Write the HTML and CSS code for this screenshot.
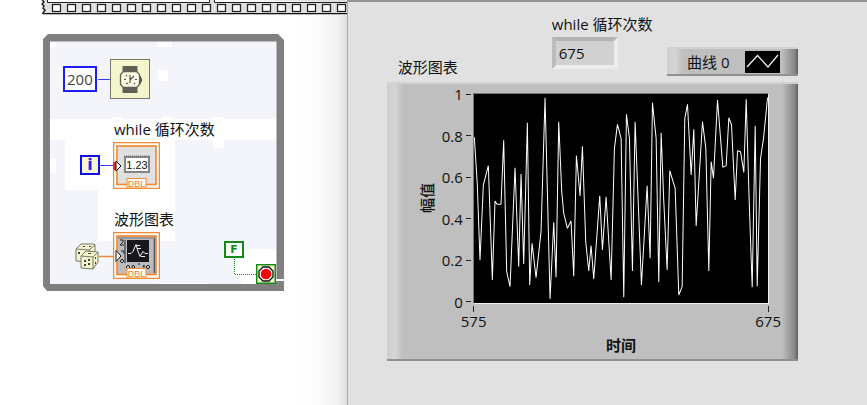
FILE: index.html
```
<!DOCTYPE html>
<html lang="zh-CN">
<head>
<meta charset="utf-8">
<title>while 循环 - 波形图表</title>
<link rel="stylesheet" href="styles.css">
</head>
<body>
<main class="workspace">
  <section class="diagram" aria-label="程序框图">
    <svg class="filmstrip" width="308" height="16" aria-hidden="true">
      <defs>
        <pattern id="hole" x="10" y="3" width="15" height="11" patternUnits="userSpaceOnUse">
          <rect x="1.5" y="1.5" width="8" height="7" fill="#fff" stroke="#222" stroke-width="1.3"/>
        </pattern>
      </defs>
      <rect x="2" width="306" height="14" fill="#e0e0e0"/>
      <path d="M6.500 -1V2.500H168.500V-1M173.500 -1V2.500H309" fill="#fff" stroke="#222"/>
      <rect x="10" y="3" width="298" height="10" fill="url(#hole)"/>
      <path d="M1 13.500H308" stroke="#111"/>
      <path d="M2 14.500H308" stroke="#bbb"/>
      <path d="M1 0l2 2-2 2 2 2-1 2 2 2-2 3" fill="none" stroke="#222" stroke-width="1.500"/>
    </svg>

    <div class="loop">
      <svg class="loop-art" width="242" height="258" viewBox="42 34 242 258" aria-hidden="true">
        <path d="M43 39l5-5h230l6 6v239h-8v5h8v7H47l-4-5z" fill="#808080"/>
        <path d="M50 41.500h226.500v242.500H50z" fill="#f4f5fb"/>
        <path d="M50 42h6v5h-6zM158 42h14v5h-14zM158 70h10v11h-10zM112 117h10v2h-10zM162 117h11v2h-11zM213 117h11v31h-11zM50 119h226v21H50zM65 140h110v50H65zM98 190h77v51H98zM50 158h6v15h-6zM241 249h35v35h-35zM234 256h7v20h-7zM158 283h50v1h-50z" fill="#fff"/>
        <path d="M276 279h8v2h-8z" fill="#fff"/>
        <path d="M276 281h8v3h-8z" fill="#808080"/>
        <path d="M98 79.500h13M100 165.500h13" stroke="#3939e8"/>
        <path d="M99 256.500h14" stroke="#f08b35" stroke-width="1.500"/>
        <path d="M234.500 259v15.500h22" fill="none" stroke="#138a18" stroke-dasharray="1 1"/>
      </svg>

      <span class="node constant">200</span>

      <svg class="node wait" width="40" height="40" role="img" aria-label="等待">
        <rect x=".5" y=".5" width="39" height="39" fill="#f5f5cd" stroke="#77776a"/>
        <path d="M12.500 7h15v7h-15zM12.500 27h15v7h-15z" fill="#606055"/>
        <path d="M13.500 12.500h13l3 3v10l-3 3h-13l-3-3v-10z" fill="#fafae2" stroke="#606055" stroke-width="1.300"/>
        <path d="M30.500 17v8M31.500 19v4" stroke="#606055"/>
        <path d="M20 24v-8M20 21l4-4M16 25l2-1M14 20.500h2M25 20.500h2M16 16l1 1M24 24l1 1" stroke="#55554b" stroke-width="1.200"/>
      </svg>

      <span class="node iteration">i</span>
      <span class="node caption caption-count">while 循环次数</span>
      <svg class="node terminal terminal-count" width="47" height="47" role="img" aria-label="while 循环次数 DBL">
        <rect x=".5" y=".5" width="46" height="46" fill="#fff" stroke="#f38b32" stroke-width="1.500"/>
        <rect x="4" y="4" width="39" height="38.500" fill="#e0e0e0" stroke="#f38b32" stroke-width="1.700"/>
        <rect x="12" y="15" width="24" height="15" fill="#fff" stroke="#858585" stroke-width="2"/>
        <path d="M11 14h26" stroke="#666" stroke-dasharray="1 1"/>
        <text x="24" y="27" class="mini">1.23</text>
        <path d="M0 20h3v8H0z" fill="#f22"/>
        <path d="M3 19v10l5-5z" fill="#fff" stroke="#111"/>
        <rect x="14" y="36.500" width="19" height="9.500" fill="#fff" stroke="#f38b32"/>
        <text x="23.500" y="45" class="type">DBL</text>
      </svg>

      <span class="node caption caption-chart">波形图表</span>
      <svg class="node dice" width="25" height="28" role="img" aria-label="随机数">
        <g fill="#f5f5cd" stroke="#77776a" stroke-linejoin="round">
          <path d="M1 7l5-5 13 0 1 1v13l-5 4-14-1z"/><path d="M1 7l13 1 6-5M14 8v10"/>
          <path d="M6 14l5-5 12 1v10l-5 7-12-1z"/><path d="M6 14l12 1 5-5M18 15v12"/>
        </g>
        <path d="M3 10h2v2H3zM8 4h2v1H8zM14 4h2v1h-2zM9 18h2v2H9zM13 21h2v2h-2zM9 22h2v2H9zM13 17h2v2h-2zM20 15h1v2h-1zM20 20h1v2h-1zM13 11h3v1h-3z" fill="#44443b"/>
      </svg>
      <svg class="node terminal terminal-chart" width="47" height="47" role="img" aria-label="波形图表 DBL">
        <rect x=".5" y=".5" width="46" height="46" fill="#fff" stroke="#f38b32" stroke-width="1.500"/>
        <rect x="4" y="4" width="39" height="38.500" fill="#bcbcbf" stroke="#f38b32" stroke-width="1.700"/>
        <path d="M5 6h36v35" fill="none" stroke="#9a9a9e" stroke-width="2"/>
        <path d="M41.500 6v35" stroke="#56565a"/>
        <rect x="14" y="8" width="22" height="22" fill="#17181e"/>
        <path d="M15 21.500h3l2-2 3-7 2 7 2 5 3-5 2 2h3M23 13.500h4M24 16.500h4M28 24.500h4" fill="none" stroke="#eee"/>
        <path d="M7 8h3v2l-3 3h4M12 8v23M8 19h3v3M7 29l2-2 2 2-2 2zM13 35l2-2 2 2-2 2zM19 35l1-2 2 2-2 2zM30 35l1-2v4M33 35l2-2 2 2-2 2zM26 31v2" fill="none" stroke="#222"/>
        <path d="M3 18.500v11l5-5.500z" fill="#fff" stroke="#111"/>
        <rect x="14" y="36.500" width="19" height="9.500" fill="#fff" stroke="#f38b32"/>
        <text x="23.500" y="45" class="type">DBL</text>
      </svg>

      <span class="node boolean">F</span>
      <svg class="node stop" width="20" height="20" role="img" aria-label="停止条件">
        <rect x=".75" y=".75" width="18.500" height="18.500" fill="#f8f8cc" stroke="#138a18" stroke-width="1.500"/>
        <path d="M7 3h6l4 4v6l-4 4H7l-4-4V7z" fill="#fff" stroke="#111" stroke-width="1.300"/>
        <circle cx="10" cy="10" r="5.300" fill="#f00"/>
      </svg>
    </div>
  </section>

  <section class="panel" aria-label="前面板">
    <header class="controls">
      <h2 class="title">波形图表</h2>
      <div class="indicator">
        <label for="count">while 循环次数</label>
        <output id="count" class="readout">675</output>
      </div>
      <div class="legend raised">
        <span>曲线 0</span>
        <svg width="35" height="22" aria-hidden="true"><rect width="35" height="22" fill="#000"/><path d="M2 16L12.500 4.500 23 16 33 4" fill="none" stroke="#eee" stroke-width="1.300"/></svg>
      </div>
    </header>

    <figure class="chart raised">
      <div class="y-title">幅值</div>
      <div class="y-axis"><span>1</span><span>0.8</span><span>0.6</span><span>0.4</span><span>0.2</span><span>0</span></div>
      <svg class="plot" viewBox="42 27 882 627" preserveAspectRatio="none" role="img" aria-label="波形">
        <polyline points="43,157 52,300 60,525 70,300 85,242 97,585 105,348 111,358 123,358 131,166 140,560 150,605 165,248 176,545 183,267 191,537 202,113 209,600 216,475 228,578 243,440 255,38 270,642 281,412 288,577 296,110 305,320 311,385 322,430 333,408 341,574 349,212 360,333 367,184 377,470 386,558 393,482 401,582 419,332 427,495 438,335 453,585 463,190 472,118 483,160 491,637 499,88 508,160 517,558 525,110 544,600 561,302 570,520 577,53 588,160 596,592 603,143 611,350 621,555 629,257 645,310 656,630 666,605 674,100 682,58 693,270 701,133 708,423 727,110 737,190 746,558 753,230 760,280 772,45 788,247 798,242 806,98 814,120 825,345 832,197 841,200 851,262 858,43 867,350 876,607 885,122 891,604 901,220 910,160 922,38"/>
      </svg>
      <div class="x-axis"><span>575</span><span>675</span></div>
      <figcaption class="x-title">时间</figcaption>
    </figure>
  </section>
</main>
</body>
</html>
```
FILE: styles.css
```
* { box-sizing: border-box; }

body {
  margin: 0;
  background: #fff;
  color: #111;
  font: 15px/20px "Open Sans", "Noto Sans CJK SC", sans-serif;
}

.workspace { display: flex; min-height: 100vh; }

/* Block diagram: a free canvas of wired nodes */
.diagram {
  position: relative;
  flex: 0 0 40%;
  background: linear-gradient(to left, #dedede 0, #f2f2f2 10px, #fafafa 26px, #fff 50px);
  overflow: hidden;
}
.filmstrip { position: absolute; left: 41px; top: 0; }
.loop { position: absolute; left: 42px; top: 34px; }
.loop-art { display: block; }
.node { position: absolute; }

.constant {
  left: 21px; top: 32px;
  padding: 0 2px;
  border: 2px solid #1c1cf5;
  background: #fff;
  line-height: 22px;
  color: #444;
}
.wait { left: 68px; top: 25px; }
.iteration {
  left: 38px; top: 121px;
  width: 20px;
  border: 2px solid #0d0df0;
  background: #f8f8cc;
  color: #2222e0;
  font: bold 16px/16px "DejaVu Sans", sans-serif;
  text-align: center;
}
.caption { white-space: nowrap; left: 72px; }
.caption-count { top: 85px; }
.caption-chart { top: 175px; }
.terminal { left: 71px; }
.terminal-count { top: 108px; }
.terminal-chart { top: 198px; }
.dice { left: 33px; top: 208px; }
.boolean {
  left: 182px; top: 207px;
  width: 20px;
  border: 2px solid #138a18;
  background: #fff;
  color: #138a18;
  font: bold 11px/13px "DejaVu Sans", sans-serif;
  text-align: center;
}
.stop { left: 214px; top: 230px; }

.mini { font: 11px "Liberation Sans", sans-serif; text-anchor: middle; fill: #111; }
.type { font: 9px "Liberation Sans", sans-serif; text-anchor: middle; fill: #f07c1c; }

/* Front panel */
.panel {
  flex: 1;
  padding: 0 69px 0 39px;
  background: #e1e1e1;
  border-top: 2px solid #959595;
  border-left: 1px solid #a8a8a8;
}
.controls {
  display: grid;
  grid-template-columns: 165px 1fr 131px;
  align-items: end;
  height: 80px;
}
.title { margin: 0; padding: 0 0 5px 11px; font-size: 15px; font-weight: 400; }
.indicator { padding-bottom: 13px; white-space: nowrap; }
.indicator label { display: block; }
.readout {
  display: block;
  width: 66px;
  margin-top: 3px;
  padding: 0 3px;
  border: 4px solid;
  border-color: #b4b4b4 #ededed #ededed #bcbcbc;
  background: #d1d1d1;
  line-height: 24px;
}
.raised {
  background: linear-gradient(to right, #cecece 0, #d5d5d5 8px, #bfbfbf 16px, #bfbfbf calc(100% - 16px), #858585 calc(100% - 3px), #5c5c5c 100%);
  border-top: 2px solid #d2d2d2;
  border-bottom: 2px solid #909090;
}
.legend {
  display: flex;
  align-items: center;
  justify-content: space-between;
  height: 29px;
  margin-bottom: 6px;
  padding: 0 18px 0 20px;
}

.chart {
  display: grid;
  grid-template-columns: 20px 34px 1fr;
  grid-template-rows: 211px auto auto;
  height: 279px;
  margin: 0;
  padding: 9px 29px 0 32px;
}
.y-title {
  align-self: center;
  justify-self: start;
  line-height: 16px;
  writing-mode: vertical-rl;
  text-orientation: sideways;
  transform: rotate(180deg);
  font-weight: 500;
}
.y-axis {
  display: flex;
  flex-direction: column;
  justify-content: space-between;
  margin: -9px 0 -8px;
}
.y-axis span {
  display: flex;
  align-items: center;
  justify-content: flex-end;
  gap: 3px;
}
.y-axis span::after { content: ""; width: 5px; height: 1px; margin-right: 2px; background: #222; }
.plot {
  width: 100%;
  height: 211px;
  background: #000;
  border: 1px solid #777;
  border-right-color: #eee;
  border-bottom-color: #eee;
}
.plot polyline { fill: none; stroke: #fff; stroke-width: 3; stroke-linejoin: bevel; }
.x-axis {
  grid-column: 3;
  display: flex;
  justify-content: space-between;
  margin: 2px -12px 0;
}
.x-axis span::before { content: ""; display: block; width: 1px; height: 6px; margin: 0 auto; background: #222; }
.x-axis span { line-height: 19px; }
.x-title { grid-column: 3; text-align: center; font-weight: 700; }
```
